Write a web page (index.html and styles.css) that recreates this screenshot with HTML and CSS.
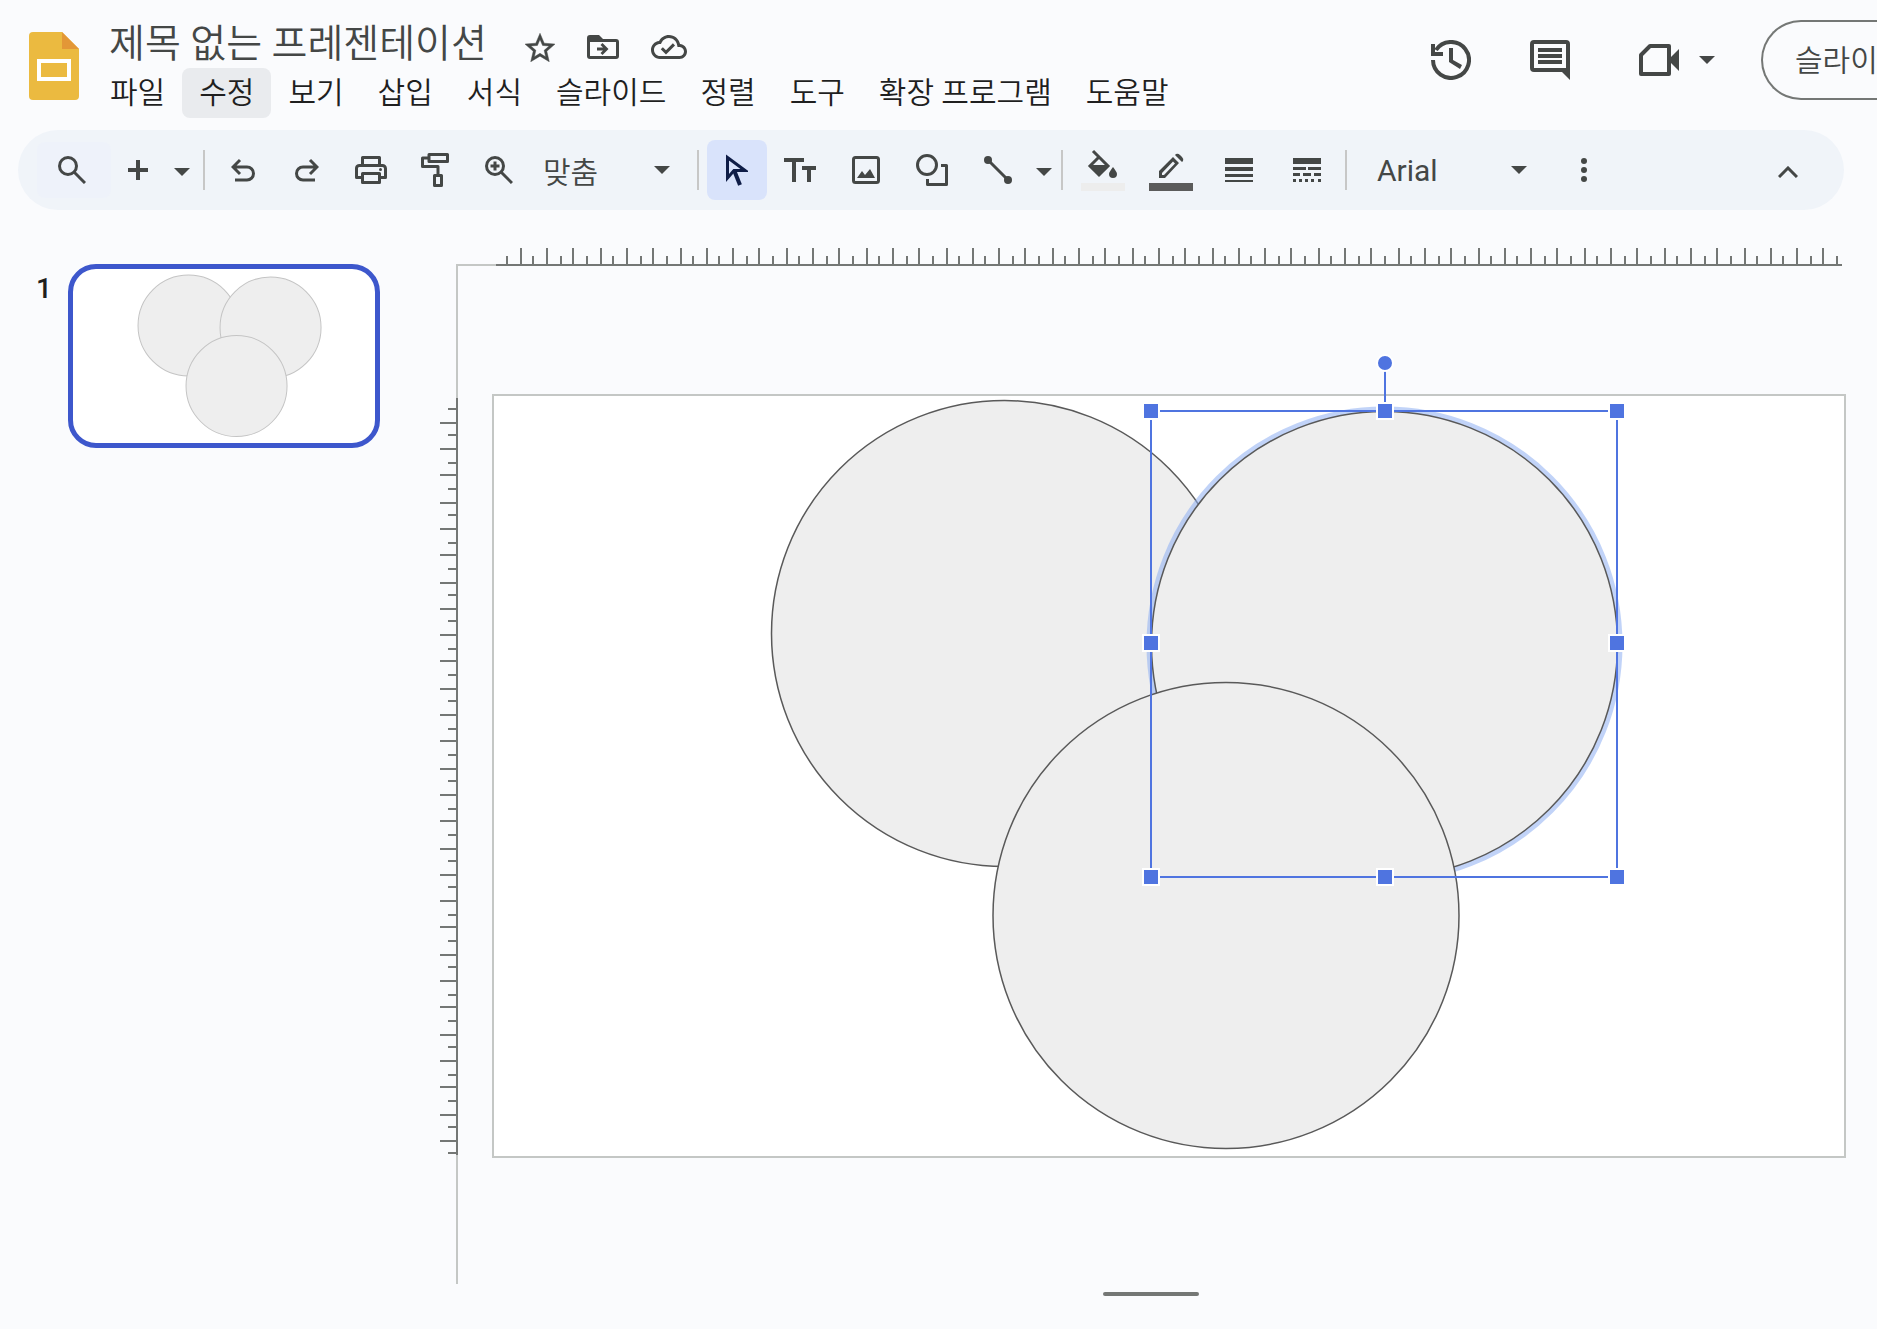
FILE: index.html
```html
<!DOCTYPE html>
<html lang="ko">
<head>
<meta charset="utf-8">
<meta name="viewport" content="width=device-width, initial-scale=1">
<title>제목 없는 프레젠테이션</title>
<link rel="stylesheet" href="styles.css">
</head>
<body>
<header class="header">
  <a class="logo" href="#" aria-label="홈">
    <svg width="50" height="68" viewBox="0 0 50 68"><path fill="#ebba40" d="M4 0H33L50 17V64a4 4 0 0 1-4 4H4a4 4 0 0 1-4-4V4a4 4 0 0 1 4-4Z"/><path fill="#e39737" d="M33 0 50 17H33Z"/><path fill="none" stroke="#fff" stroke-width="4" d="M10 29H40V47H10Z"/></svg>
  </a>
  <div class="document">
    <div class="title-row">
      <h1 class="title">제목 없는 프레젠테이션</h1>
      <button class="icon-button" aria-label="별표"><svg width="30" height="29" viewBox="2 2 20 19"><path stroke="#444746" stroke-width=".3" d="M22 9.24l-7.19-.62L12 2 9.19 8.63 2 9.24l5.46 4.73L5.82 21 12 17.27 18.18 21l-1.63-7.03L22 9.24zM12 15.4l-3.76 2.27 1-4.28-3.32-2.88 4.38-.38L12 6.1l1.71 4.04 4.38.38-3.32 2.88 1 4.28L12 15.4z"/></svg></button>
      <button class="icon-button" aria-label="이동"><svg width="32" height="24" viewBox="0 0 32 24"><path fill-rule="evenodd" d="M3 0H12L16 4H29a3 3 0 0 1 3 3V21a3 3 0 0 1-3 3H3a3 3 0 0 1-3-3V3a3 3 0 0 1 3-3ZM3 7V21H29V7Z"/><path d="M10 12.500h6l-2.500-2.500 2-2 6 6-6 6-2-2 2.500-2.500h-6Z"/></svg></button>
      <button class="icon-button" aria-label="저장됨"><svg width="36" height="24" viewBox="0 4 24 16"><path d="M19.350 10.040C18.670 6.590 15.640 4 12 4 9.110 4 6.600 5.640 5.350 8.040 2.340 8.360 0 10.910 0 14c0 3.310 2.690 6 6 6h13c2.760 0 5-2.240 5-5 0-2.640-2.050-4.780-4.650-4.960zM19 18H6c-2.210 0-4-1.790-4-4 0-2.050 1.530-3.760 3.560-3.970l1.070-.110.500-.950C8.080 7.140 9.940 6 12 6c2.620 0 4.880 1.860 5.390 4.430l.300 1.500 1.530.110c1.560.100 2.780 1.410 2.780 2.960 0 1.650-1.350 3-3 3zm-9-3.820-2.090-2.090L6.500 13.500 10 17l6.010-6.010-1.410-1.410z"/></svg></button>
    </div>
    <nav class="menu">
      <button>파일</button><button class="hovered">수정</button><button>보기</button><button>삽입</button><button>서식</button><button>슬라이드</button><button>정렬</button><button>도구</button><button>확장 프로그램</button><button>도움말</button>
    </nav>
  </div>
  <div class="actions">
    <button class="icon-button history" aria-label="기록"><svg width="40" height="40" viewBox="0 0 40 40"><path fill="none" stroke="#444746" stroke-width="4" d="M2 20A18 18 0 1 0 5 10"/><path d="M0 4H4V12H12V16H0ZM18 8h4v12l9 5-2 4-11-7Z"/></svg></button>
    <button class="icon-button comments" aria-label="댓글"><svg width="40" height="40" viewBox="0 0 40 40"><path fill-rule="evenodd" d="M4 0H36a4 4 0 0 1 4 4V40L32 32H4a4 4 0 0 1-4-4V4a4 4 0 0 1 4-4ZM4 4V28H36V4Z"/><path d="M8 8H32v4H8ZM8 14H32v4H8ZM8 20H32v4H8Z"/></svg></button>
    <button class="icon-button meet" aria-label="화상 회의"><svg width="40" height="32" viewBox="0 0 40 32"><path fill="none" stroke="#444746" stroke-width="4" stroke-linejoin="round" d="M11 2H30V30H2V11Z"/><path d="M30 15 40 5V27L30 17Z"/></svg><svg class="caret" width="16" height="8" viewBox="0 0 16 8"><path d="M0 0H16L8 8Z"/></svg></button>
    <button class="slideshow">슬라이드쇼</button>
  </div>
</header>

<div class="toolbar" role="toolbar">
  <button class="tool search" aria-label="검색"><svg width="28" height="28" viewBox="0 0 28 28"><g fill="none" stroke="#444746" stroke-width="3"><circle cx="10" cy="10" r="8.500"/><path d="m16 16 11 11"/></g></svg></button>
  <button class="tool add" aria-label="새 슬라이드"><svg width="20" height="20" viewBox="0 0 20 20"><path d="M8 0h4v8h8v4h-8v8H8v-8H0V8h8Z"/></svg></button>
  <button class="tool menu-arrow" aria-label="레이아웃"><svg width="16" height="8" viewBox="0 0 16 8"><path d="M0 0H16L8 8Z"/></svg></button>
  <i class="separator"></i>
  <button class="tool" aria-label="실행취소"><svg width="24" height="24" viewBox="0 0 24 24"><path fill="none" stroke="#444746" stroke-width="3" d="M9 2 2 9l7 7M2 9h14a6.500 6.500 0 0 1 0 13H4"/></svg></button>
  <button class="tool" aria-label="재실행"><svg width="24" height="24" viewBox="0 0 24 24"><path fill="none" stroke="#444746" stroke-width="3" d="m15 2 7 7-7 7M22 9H8a6.500 6.500 0 0 0 0 13h12"/></svg></button>
  <button class="tool" aria-label="인쇄"><svg width="32" height="28" viewBox="0 0 32 28"><path fill="none" stroke="#444746" stroke-width="3" stroke-linejoin="round" d="M7.500 8V1.500h17V8M7 21.500H1.500V12A3 3 0 0 1 4.500 9.500h23a3 3 0 0 1 3 3v9H25M7.500 17.500h17v9h-17Z"/><circle cx="25.500" cy="13.500" r="1.500"/></svg></button>
  <button class="tool" aria-label="서식 복사"><svg width="28" height="34" viewBox="0 0 28 34"><path fill="none" stroke="#444746" stroke-width="3" stroke-linejoin="round" d="M8 1.500h18.500v7H8ZM8 5H1.500v8.500H17V22M13.500 22.500h7v10h-7Z"/></svg></button>
  <button class="tool" aria-label="확대/축소"><svg width="28" height="28" viewBox="0 0 28 28"><g fill="none" stroke="#444746" stroke-width="3"><circle cx="10" cy="10" r="8.500"/><path d="m16 16 11 11M10 5.500v9M5.500 10h9"/></g></svg></button>
  <button class="tool zoom-level">맞춤<svg width="16" height="8" viewBox="0 0 16 8"><path d="M0 0H16L8 8Z"/></svg></button>
  <i class="separator"></i>
  <button class="tool selected" aria-label="선택"><svg width="22" height="32" viewBox="0 0 22 32"><path fill="none" stroke="#0f1d47" stroke-width="3" d="M1.500 3.500V24L8 16.500H19Z"/><path fill="none" stroke="#0f1d47" stroke-width="4" d="m8 16 6 15"/></svg></button>
  <button class="tool draw" aria-label="텍스트 상자"><svg width="32" height="24" viewBox="0 0 32 24"><path d="M0 0H20v4h-8v20H8V4H0ZM18 8H32v4h-5v12h-4V12h-5Z"/></svg></button>
  <button class="tool draw" aria-label="이미지"><svg width="28" height="28" viewBox="0 0 28 28"><rect x="1.500" y="1.500" width="25" height="25" rx="2" fill="none" stroke="#444746" stroke-width="3"/><path d="m5 22 5-7 3 4 5-6 5 9Z"/></svg></button>
  <button class="tool draw" aria-label="도형"><svg width="32" height="32" viewBox="0 0 32 32"><g fill="none" stroke="#444746" stroke-width="3"><circle cx="11" cy="11" r="9.500"/><path stroke-linejoin="round" d="M25 11.500h5.500v19h-19V25"/></g></svg></button>
  <button class="tool draw" aria-label="선"><svg width="28" height="28" viewBox="0 0 28 28"><path stroke="#444746" stroke-width="3" d="m4 4 20 20"/><circle cx="4" cy="4" r="4"/><circle cx="24" cy="24" r="4"/></svg></button>
  <button class="tool menu-arrow narrow" aria-label="선 종류"><svg width="16" height="8" viewBox="0 0 16 8"><path d="M0 0H16L8 8Z"/></svg></button>
  <i class="separator"></i>
  <button class="tool style" aria-label="채우기 색상"><svg width="44" height="42" viewBox="0 0 44 42"><path fill="#ededed" d="M0 34h44v8H0Z"/><path fill="none" stroke="#444746" stroke-width="3" d="m12 2 6 6 9 9-9 9-9-9 9-9"/><path d="M9 16h18l-9 10ZM32 18c2 3 4 5 4 7a4 4 0 0 1-8 0c0-2 2-4 4-7Z"/></svg></button>
  <button class="tool style" aria-label="테두리 색상"><svg width="44" height="42" viewBox="0 0 44 42"><path fill="#5b5b5b" d="M0 34h44v8H0Z"/><path fill-rule="evenodd" d="M10 22 24 8l6 6-14 15h-6Zm3 2V26h2L26 14.500 24 12.500ZM26 6l1-1q2-1 4 1l2 2q2 2 1 4l-1 1Z"/></svg></button>
  <button class="tool style" aria-label="테두리 두께"><svg width="28" height="24" viewBox="0 0 28 24"><path d="M0 0h28v6H0ZM0 9h28v4H0ZM0 16h28v3H0ZM0 22h28v2H0Z"/></svg></button>
  <button class="tool style" aria-label="테두리 대시"><svg width="28" height="24" viewBox="0 0 28 24"><path d="M0 0h28v6H0ZM0 9h13v3H0ZM15 9h13v3H15ZM0 15h7v3H0ZM10 15h8v3h-8ZM21 15h7v3h-7ZM0 21h3v3H0ZM6 21h3v3H6ZM12 21h3v3h-3ZM18 21h3v3h-3ZM25 21h3v3h-3Z"/></svg></button>
  <i class="separator"></i>
  <button class="tool font-name">Arial<svg width="16" height="8" viewBox="0 0 16 8"><path d="M0 0H16L8 8Z"/></svg></button>
  <button class="tool more" aria-label="더보기"><svg width="6" height="24" viewBox="0 0 6 24"><circle cx="3" cy="3" r="3"/><circle cx="3" cy="12" r="3"/><circle cx="3" cy="21" r="3"/></svg></button>
  <button class="tool collapse" aria-label="메뉴 숨기기"><svg width="20" height="12" viewBox="0 0 20 12"><path fill="none" stroke="#444746" stroke-width="3" d="m1 11 9-9 9 9"/></svg></button>
</div>

<main class="workspace">
  <aside class="filmstrip">
    <span class="slide-number">1</span>
    <button class="thumbnail" aria-label="슬라이드 1">
      <svg viewBox="0 0 302 174"><g fill="#eee" stroke="#c4c4c4"><circle cx="115.500" cy="56.500" r="50.500"/><circle cx="197.500" cy="58.500" r="50.500"/><circle cx="163.500" cy="117" r="50.500"/></g></svg>
    </button>
  </aside>
  <section class="editor">
    <svg class="canvas" viewBox="440 248 1437 1036">
      <path fill="none" stroke="#c4c7c5" stroke-width="2" d="M496 265H457V1284"/>
      <path fill="none" stroke="#747775" stroke-width="2" d="M496 265H1842M457 398V1155"/>
      <path id="ticks" fill="none" stroke="#747775" stroke-width="2"/>
      <rect x="493" y="395" width="1352" height="762" fill="#fff" stroke="#c4c7c5" stroke-width="2"/>
      <g fill="#eee" stroke="#595959" stroke-width="1.500">
        <circle cx="1004.500" cy="633.500" r="233"/>
        <circle cx="1384.500" cy="644.500" r="235" fill="none" stroke="#8eaef2" stroke-opacity=".55" stroke-width="6"/>
        <circle cx="1384.500" cy="644.500" r="233"/>
        <circle cx="1226" cy="915.500" r="233"/>
      </g>
      <g stroke="#4f74e0" stroke-width="2" fill="none"><rect x="1151" y="411" width="466" height="466"/><path d="M1385 363V411"/></g>
      <g fill="#4f74e0" stroke="#fff" stroke-width="2">
        <circle cx="1385" cy="363" r="8"/>
        <rect x="1143" y="403" width="16" height="16"/><rect x="1377" y="403" width="16" height="16"/><rect x="1609" y="403" width="16" height="16"/>
        <rect x="1143" y="635" width="16" height="16"/><rect x="1609" y="635" width="16" height="16"/>
        <rect x="1143" y="869" width="16" height="16"/><rect x="1377" y="869" width="16" height="16"/><rect x="1609" y="869" width="16" height="16"/>
      </g>
    </svg>
    <div class="notes-bar"><div class="notes-handle"></div></div>
  </section>
</main>
<script src="ruler.js"></script>
</body>
</html>
```
FILE: styles.css
```css
* { box-sizing: border-box; }
body {
  margin: 0;
  background: #fafbfd;
  color: #1f1f1f;
  font-family: Roboto, "Noto Sans CJK KR", sans-serif;
  overflow-x: hidden;
}
button {
  display: flex;
  align-items: center;
  justify-content: center;
  flex: none;
  padding: 0;
  border: 0;
  background: none;
  color: inherit;
  font: inherit;
  white-space: nowrap;
}
svg { display: block; flex: none; fill: #444746; }

.header { display: flex; height: 130px; padding-left: 29px; overflow: hidden; }
.logo { padding-top: 32px; }
.document { margin-left: 14px; padding-top: 20px; }
.title-row { display: flex; align-items: center; height: 48px; padding-left: 16px; }
.title {
  margin: 0 38px 0 0;
  color: #444746;
  font-size: 39px;
  font-weight: 350;
  line-height: 48px;
  white-space: nowrap;
}
.title-row .icon-button { margin-right: 32px; padding-top: 6px; }
.menu { display: flex; }
.menu button {
  height: 50px;
  padding: 0 17px;
  border-radius: 8px;
  font-size: 30px;
  font-weight: 350;
  line-height: 50px;
}
.menu .hovered { background: #e9ebee; }
.actions { display: flex; align-items: center; height: 80px; margin: 20px 0 0 auto; }
.history, .comments { margin-right: 59px; }
.meet { gap: 20px; margin: 0 46px 0 10px; }
.slideshow {
  width: 116px;
  height: 80px;
  padding: 0 0 4px 32px;
  justify-content: flex-start;
  overflow: hidden;
  border: 2px solid #747775;
  border-right: 0;
  border-radius: 40px 0 0 40px;
  color: #444746;
  font-size: 30px;
  font-weight: 350;
}

.toolbar {
  display: flex;
  align-items: center;
  height: 80px;
  margin: 0 33px 0 18px;
  padding: 0 46px 0 19px;
  border-radius: 40px;
  background: #f0f4f9;
}
.tool { width: 64px; height: 60px; border-radius: 8px; }
.tool.search { width: 74px; height: 56px; padding-right: 4px; background: #eef2fa; }
.tool.add { width: 54px; }
.tool.menu-arrow { width: 34px; padding-top: 4px; }
.tool.menu-arrow.narrow { width: 26px; }
.separator { flex: none; width: 2px; height: 40px; background: #c7c7c7; margin: 0 6px 0 4px; }
.tool.zoom-level, .tool.font-name {
  justify-content: space-between;
  color: #444746;
  font-size: 30px;
  font-weight: 400;
}
.tool.zoom-level {
  width: 162px;
  padding: 0 23px 0 12px;
  font-weight: 350;
}
.tool.selected { width: 60px; margin-left: 2px; background: #d9e3fb; }
.tool.draw { width: 66px; }
.tool.style { width: 68px; }
.tool.font-name { width: 198px; padding: 0 24px; }
.tool.more { width: 66px; }
.tool.collapse { width: 20px; margin-left: auto; padding-top: 4px; }

.workspace { display: grid; grid-template-columns: 440fr 1437fr; padding-top: 38px; }
.filmstrip { display: flex; align-items: flex-start; gap: 16px; padding: 16px 60px 0 36px; }
.slide-number { margin-top: 9px; font-size: 28px; font-weight: 500; line-height: 32px; }
.thumbnail {
  flex: 1;
  overflow: hidden;
  border: 5px solid #3d57cc;
  border-radius: 28px;
  background: #fff;
}
.thumbnail svg { width: 100%; }
.canvas { width: 100%; }
.notes-bar { display: flex; justify-content: center; padding: 8px 15px 0 0; }
.notes-handle {
  width: 96px;
  height: 4px;
  border-radius: 2px;
  background: #747775;
}
```
FILE: ruler.js
```js
// Tick marks: short and long ones alternate along both rulers.
const snap = (value) => 2 * Math.round(value / 2) + 1;
let d = '';
for (let k = 1; k <= 101; k++) {
  const length = k % 2 ? 8 : 16;
  const x = snap(492.8 + 13.3 * k);
  d += `M${x} 264v${-length}`;
  if (k <= 57) d += `M456 ${x - 98}h${-length}`;
}
document.getElementById('ticks').setAttribute('d', d);
```
